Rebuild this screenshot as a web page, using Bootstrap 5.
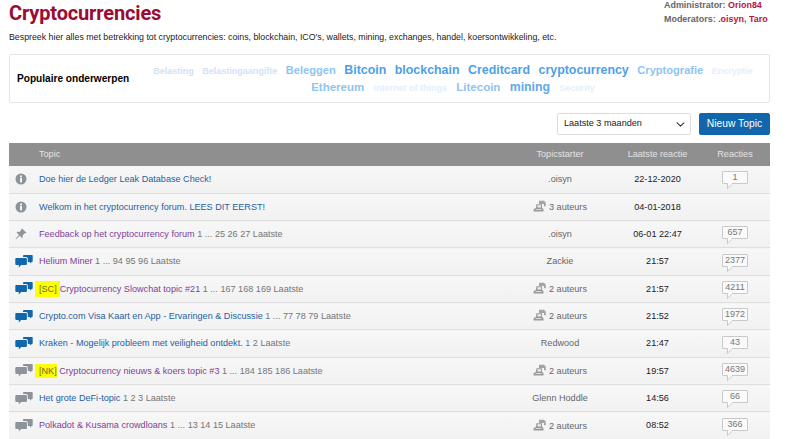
<!DOCTYPE html>
<html lang="nl"><head><meta charset="utf-8"><title>Cryptocurrencies</title>
<link href="https://cdn.jsdelivr.net/npm/bootstrap@5.3.0/dist/css/bootstrap.min.css" rel="stylesheet">
<style>
html,body{height:439px;overflow:hidden}
body{font-family:"Liberation Sans",Arial,sans-serif;font-size:9.1px;color:#222;background:#fff}
.pg{width:761px;margin-left:9px}
.hd{height:54px}
.ttl{font-family:Roboto,"Liberation Sans",sans-serif;font-weight:700;font-size:20px;letter-spacing:-.15px;line-height:26px;color:#9a0c33;margin:0}
.dsc{font-size:8.8px;line-height:12px;margin:5px 0 0;color:#222;white-space:nowrap}
.mods{font-size:8.95px;font-weight:700;line-height:14px;color:#666;margin-top:-2px;width:106px;flex:none;white-space:nowrap}
.mods a{color:#b3143f;text-decoration:none}
.popbox{height:49px;border:1px solid #e4e4e4;border-radius:2px;padding:0 8px 0 7px}
.poptl{font-weight:700;font-size:10.1px;color:#000;width:128px;flex:none}
.cloud{line-height:16px;text-align:center;font-weight:700;white-space:nowrap;min-width:0}
.cloud a{text-decoration:none;margin:0 3px}
.rw2 a{margin:0 3.4px}
.t1{font-size:9px;color:#cfe4f8}.t0{font-size:9px;color:#e3effb}.t2{font-size:11.1px;color:#8fc4f2}.t2b{font-size:11.500px;color:#8fc4f2}.t3{font-size:12.4px;color:#4d9fe8}.t4{font-size:12.3px;color:#5fa9ea}
.tools{height:40px;gap:8px;padding-top:2px}
.sel{width:134px;height:22px;font-size:9.1px;padding:0 6px;border-radius:2px;border-color:#ddd;color:#222;background-size:11px 9px;background-position:right 4px center}
.nw{height:22px;width:71px;padding:0;font-size:10.3px;border-radius:2px;background:#1166ac;border-color:#1166ac;line-height:20px}
.tbl{table-layout:fixed;width:761px;margin:0;font-size:9.1px}
.tbl th{background:#8f8f8f;color:#e4e4e4;font-weight:400;height:23px;padding:1px 0 0;border:0;vertical-align:middle}
.tbl td{background:linear-gradient(#f7f7f7,#f1f1f1);height:27.33px;padding:1px 0 0;border-bottom:1px solid #dedede;vertical-align:middle;color:#666}
.tbl td.ic,.tbl td.cr{padding-top:0}
.ic{width:30px;padding-left:6px!important}
.ic svg{display:block}
.tpc a{text-decoration:none}
.nv{color:#1f5fa3}.vs{color:#7e3f98}
.pg-l{color:#767676}
.hl{background:#ff0;color:#6a6a20;padding:2px 0 2px 4px;margin-left:-4px}
.hl-w{padding:3px 3px 3px 4px}
.cs{width:110px;text-align:center}.tbl th.cs{text-align:center}
.cd{width:85px;text-align:center}.tbl td.cd{color:#222}
.cr{width:70px;text-align:center}
.bub{display:inline-block;position:relative;width:26px;height:13px;line-height:11px;border:1px solid #c9c9c9;border-radius:1px;background:#fafafa;font-size:9px;color:#777;vertical-align:middle;margin-bottom:3px}
.bub::after{content:"";position:absolute;left:4px;bottom:-4px;width:5px;height:5px;background:#fafafa;border-left:1px solid #c9c9c9;border-bottom:1px solid #c9c9c9;transform:skewY(-40deg)}
.cs svg{vertical-align:-2px;margin-right:2px}
</style></head><body>
<svg width="0" height="0" class="d-block position-absolute"><defs>
<symbol id="i" viewBox="0 0 12 12"><circle cx="6" cy="6" r="5.500" fill="#8d939b"/><rect x="5" y="5" width="2" height="4.400" fill="#f3f3f3"/><rect x="5" y="2.500" width="2" height="1.800" fill="#f3f3f3"/></symbol>
<symbol id="p" viewBox="0 0 12 12"><path d="M7 .6l4.400 4.200-1 .8-.8-.3-2 2.200.2 1.700-.9.8-2.200-2.300L1 11.200l-.4-.4 3.300-3.900-2.300-2.300.9-.9 1.700.3L6.400 2l-.3-.6z" fill="#8d939b"/></symbol>
<symbol id="c" viewBox="0 0 18 13"><path d="M1.300 3h9.600q1 0 1 1v5q0 1-1 1H6.200l-2.400 2.600v-2.600H1.300q-1 0-1-1V4q0-1 1-1z"/><path d="M9 .1h8q.7 0 .7.7v5.500q0 .7-.7.7h-.7l-.2 1.500-1.600-1.500H12.800V3.800q0-1.700-1.800-1.700H8V1q0-.9 1-.9z"/></symbol>
<symbol id="u" viewBox="0 0 14 12"><path d="M6 .8h5l1.800 2v3.500H11V4H6z" fill="#a4a4a4"/><path d="M3.400 4.300H9v3.500l1.500 1.500v2.200H.6V9.300L3 7.800z" fill="#999"/><path d="M4.500 5.300h3.500v2.300H4.500zM2.500 9h6v.8h-6z" fill="#eee"/></symbol>
</defs></svg>
<div class="pg">
<div class="hd d-flex justify-content-between">
<div><h1 class="ttl">Cryptocurrencies</h1><p class="dsc">Bespreek hier alles met betrekking tot cryptocurrencies: coins, blockchain, ICO's, wallets, mining, exchanges, handel, koersontwikkeling, etc.</p></div>
<div class="mods"><div>Administrator: <a href="#">Orion84</a></div><div>Moderators: <a href="#">.oisyn</a>, <a href="#">Taro</a></div></div>
</div>
<div class="popbox d-flex align-items-center">
<div class="poptl">Populaire onderwerpen</div>
<div class="cloud flex-grow-1"><div><a class="t1" href="#">Belasting</a> <a class="t1" href="#">Belastingaangifte</a> <a class="t2" href="#">Beleggen</a> <a class="t3" href="#">Bitcoin</a> <a class="t3" href="#">blockchain</a> <a class="t3" href="#">Creditcard</a> <a class="t3" href="#">cryptocurrency</a> <a class="t2" href="#">Cryptografie</a> <a class="t0" href="#">Encryptie</a></div><div class="rw2"><a class="t2b" href="#">Ethereum</a> <a class="t0" href="#">Internet of things</a> <a class="t2b" href="#">Litecoin</a> <a class="t4" href="#">mining</a> <a class="t0" href="#">Security</a></div></div>
</div>
<div class="tools d-flex justify-content-end align-items-center">
<select class="form-select sel"><option>Laatste 3 maanden</option></select>
<button class="btn btn-primary nw">Nieuw Topic</button>
</div>
<table class="table tbl">
<thead><tr><th class="ic"></th><th>Topic</th><th class="cs">Topicstarter</th><th class="cd">Laatste reactie</th><th class="cr">Reacties</th></tr></thead>
<tbody>
<tr><td class="ic"><svg width="12" height="12"><use href="#i"/></svg></td><td class="tpc"><a class="nv" href="#">Doe hier de Ledger Leak Database Check!</a></td><td class="cs">.oisyn</td><td class="cd">22-12-2020</td><td class="cr"><span class="bub">1</span></td></tr>
<tr><td class="ic"><svg width="12" height="12"><use href="#i"/></svg></td><td class="tpc"><a class="nv" href="#">Welkom in het cryptocurrency forum. LEES DIT EERST!</a></td><td class="cs"><svg width="14" height="12"><use href="#u"/></svg>3 auteurs</td><td class="cd">04-01-2018</td><td class="cr"></td></tr>
<tr><td class="ic"><svg width="12" height="12"><use href="#p"/></svg></td><td class="tpc"><a class="vs" href="#">Feedback op het cryptocurrency forum</a> <span class="pg-l">1 ... 25 26 27 Laatste</span></td><td class="cs">.oisyn</td><td class="cd">06-01 22:47</td><td class="cr"><span class="bub">657</span></td></tr>
<tr><td class="ic"><svg width="18" height="13" fill="#1166ac"><use href="#c"/></svg></td><td class="tpc"><a class="vs" href="#">Helium Miner</a> <span class="pg-l">1 ... 94 95 96 Laatste</span></td><td class="cs">Zackie</td><td class="cd">21:57</td><td class="cr"><span class="bub">2377</span></td></tr>
<tr><td class="ic"><svg width="18" height="13" fill="#1166ac"><use href="#c"/></svg></td><td class="tpc"><span class="hl hl-w">[SC]</span><a class="vs" href="#">Cryptocurrency Slowchat topic #21</a> <span class="pg-l">1 ... 167 168 169 Laatste</span></td><td class="cs"><svg width="14" height="12"><use href="#u"/></svg>2 auteurs</td><td class="cd">21:57</td><td class="cr"><span class="bub">4211</span></td></tr>
<tr><td class="ic"><svg width="18" height="13" fill="#1166ac"><use href="#c"/></svg></td><td class="tpc"><a class="nv" href="#">Crypto.com Visa Kaart en App - Ervaringen &amp; Discussie</a> <span class="pg-l">1 ... 77 78 79 Laatste</span></td><td class="cs"><svg width="14" height="12"><use href="#u"/></svg>2 auteurs</td><td class="cd">21:52</td><td class="cr"><span class="bub">1972</span></td></tr>
<tr><td class="ic"><svg width="18" height="13" fill="#1166ac"><use href="#c"/></svg></td><td class="tpc"><a class="nv" href="#">Kraken - Mogelijk probleem met veiligheid ontdekt.</a> <span class="pg-l">1 2 Laatste</span></td><td class="cs">Redwood</td><td class="cd">21:47</td><td class="cr"><span class="bub">43</span></td></tr>
<tr><td class="ic"><svg width="18" height="13" fill="#8d939b"><use href="#c"/></svg></td><td class="tpc"><span class="hl">[NK]</span> <a class="vs" href="#">Cryptocurrency nieuws &amp; koers topic #3</a> <span class="pg-l">1 ... 184 185 186 Laatste</span></td><td class="cs"><svg width="14" height="12"><use href="#u"/></svg>2 auteurs</td><td class="cd">19:57</td><td class="cr"><span class="bub">4639</span></td></tr>
<tr><td class="ic"><svg width="18" height="13" fill="#8d939b"><use href="#c"/></svg></td><td class="tpc"><a class="nv" href="#">Het grote DeFi-topic</a> <span class="pg-l">1 2 3 Laatste</span></td><td class="cs">Glenn Hoddle</td><td class="cd">14:56</td><td class="cr"><span class="bub">66</span></td></tr>
<tr><td class="ic"><svg width="18" height="13" fill="#8d939b"><use href="#c"/></svg></td><td class="tpc"><a class="vs" href="#">Polkadot &amp; Kusama crowdloans</a> <span class="pg-l">1 ... 13 14 15 Laatste</span></td><td class="cs"><svg width="14" height="12"><use href="#u"/></svg>2 auteurs</td><td class="cd">08:52</td><td class="cr"><span class="bub">366</span></td></tr>
</tbody></table>
</div>
</body></html>
